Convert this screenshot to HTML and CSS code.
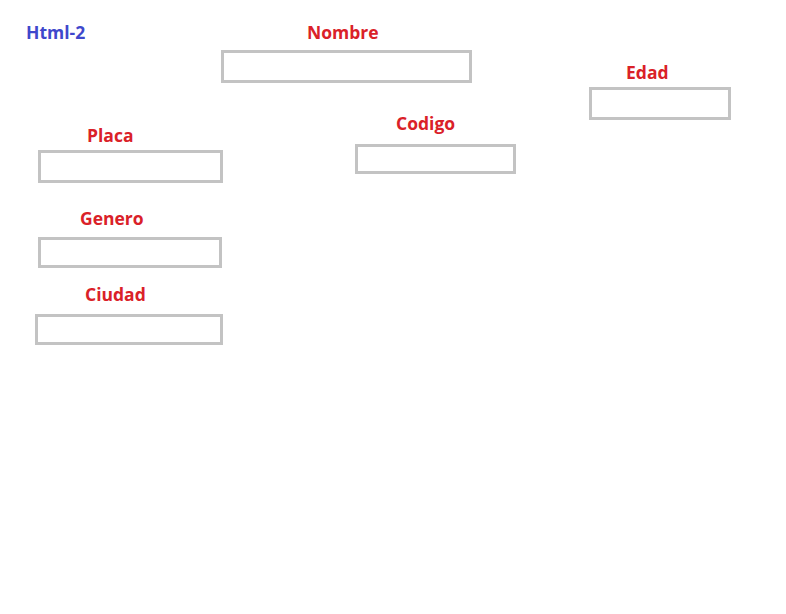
FILE: index.html
```html
<!DOCTYPE html>
<html lang="es">
<head>
  <meta charset="UTF-8" />
  <meta name="viewport" content="width=device-width, initial-scale=1.0" />
  <title>Html-2</title>
  <link rel="stylesheet" href="styles.css">
</head>
<body>

<main class="canvas">
  <!-- columna izquierda: titulo + placa / genero / ciudad -->
  <section class="col col-left">
    <h1 class="title">Html-2</h1>

    <div class="field placa">
      <label for="placa">Placa</label>
      <input id="placa" type="text">
    </div>
    <div class="field genero">
      <label for="genero">Genero</label>
      <input id="genero" type="text">
    </div>
    <div class="field ciudad">
      <label for="ciudad">Ciudad</label>
      <input id="ciudad" type="text">
    </div>
  </section>

  <!-- columna central -->
  <section class="col col-mid">
    <div class="field nombre">
      <label for="nombre">Nombre</label>
      <input id="nombre" type="text">
    </div>
    <div class="field codigo">
      <label for="codigo">Codigo</label>
      <input id="codigo" type="text">
    </div>
  </section>

  <!-- columna derecha -->
  <section class="col col-right">
    <div class="field edad">
      <label for="edad">Edad</label>
      <input id="edad" type="text">
    </div>
  </section>
</main>

</body>
</html>
```

FILE: styles.css
```css
:root   { --red:#da2128; --blue:#3f48cc; --line:#c3c3c3; }
*       { box-sizing:border-box; margin:0; padding:0; }
body    { font-family:'Open Sans',sans-serif; background:#fff; }

.canvas { display:flex; align-items:flex-start; }
.col    { display:flex; flex-direction:column; flex-shrink:0; }
.col-left  { width:221px; }
.col-mid   { width:368px; padding-top:20px; }
.col-right { padding-top:60px; }

.title  { font-size:17.5px; line-height:24px; font-weight:700; color:var(--blue);
          margin:20px 0 0 26px; }

label   { display:block; font-size:17.5px; line-height:24px; font-weight:700;
          color:var(--red); }
input   { display:block; border:3px solid var(--line); background:#fff;
          outline:none; font:inherit; padding:0 6px; }

/* field placement */
.placa  { margin-top:79px; }
.placa label  { margin-left:87px; }
.placa input  { margin:3px 0 0 38px; width:185px; height:33px; }

.genero { margin-top:23px; }
.genero label { margin-left:80px; }
.genero input { margin:7px 0 0 38px; width:184px; height:31px; }

.ciudad { margin-top:14px; }
.ciudad label { margin-left:85px; }
.ciudad input { margin:8px 0 0 35px; width:188px; height:31px; }

.nombre label { margin-left:86px; }
.nombre input { margin-top:6px; width:251px; height:33px; }

.codigo { margin-top:28px; }
.codigo label { margin-left:175px; }
.codigo input { margin:9px 0 0 134px; width:161px; height:30px; }

.edad label { margin-left:37px; }
.edad input { margin-top:3px; width:142px; height:33px; }
```
